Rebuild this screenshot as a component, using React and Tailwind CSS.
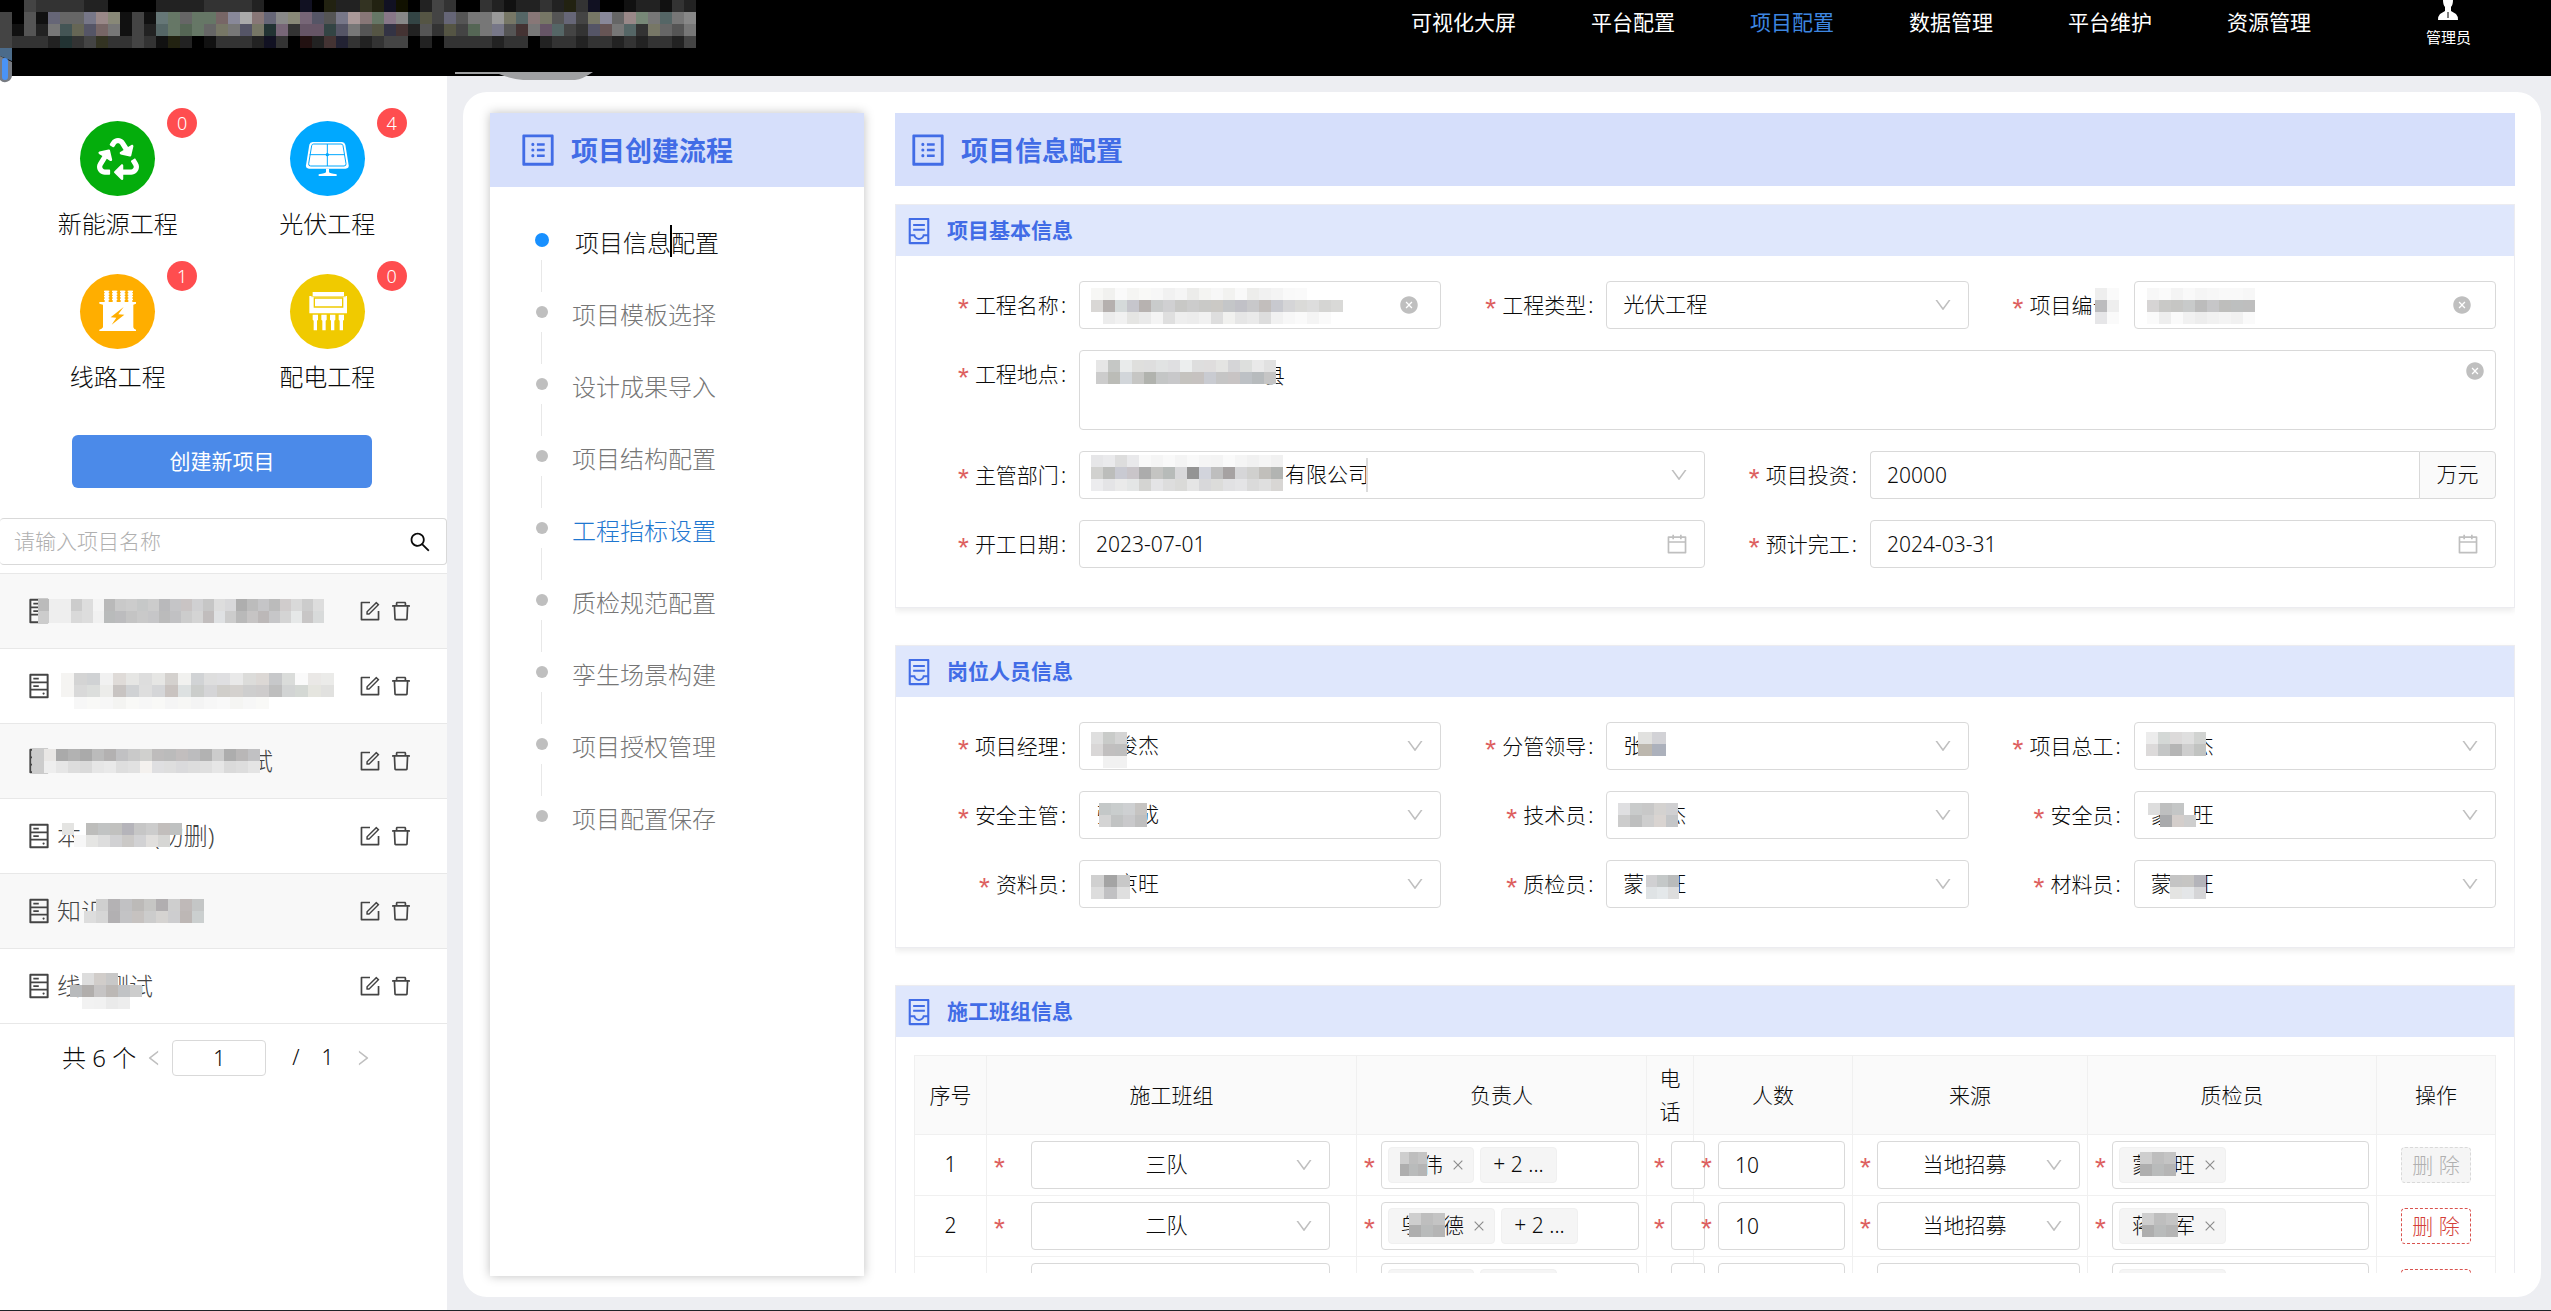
import { useState } from "react";
import {
  AiFillCloseCircle,
  AiOutlineCalendar,
  AiOutlineClose,
  AiOutlineContainer,
  AiOutlineDelete,
  AiOutlineDown,
  AiOutlineForm,
  AiOutlineHdd,
  AiOutlineLeft,
  AiOutlineProfile,
  AiOutlineRight,
  AiOutlineSearch,
} from "react-icons/ai";
import { FaRecycle } from "react-icons/fa";

const NAV = ["可视化大屏", "平台配置", "项目配置", "数据管理", "平台维护", "资源管理"];

const STEPS = [
  "项目信息配置",
  "项目模板选择",
  "设计成果导入",
  "项目结构配置",
  "工程指标设置",
  "质检规范配置",
  "孪生场景构建",
  "项目授权管理",
  "项目配置保存",
];

// Cada fila del mosaico es una lista de celdas; "-" queda transparente
const MASKS = {
  brand: [
    "- - 444 333 333 333 333 222 222 - - - - 222 222 222 222 333 333 333 333 222 - - - 112 - 221 222 222 332 221 112 110 - 222 444 333 - - 333 222 111 222 222 333 222 221 333 112 - - 111 222 222 111 333 222",
    "444 000 555 111 667 666 666 778 988 887 111 444 111 677 676 666 676 676 766 889 aaa 877 667 888 887 767 556 555 778 a99 877 676 878 888 344 554 444 667 555 777 777 999 776 566 877 776 555 667 444 776 889 666 988 787 777 566 777 888",
    "444 111 555 222 777 455 665 556 766 777 111 444 222 566 676 565 676 666 776 777 556 776 233 767 333 656 656 344 556 777 555 554 334 433 222 555 333 554 444 565 777 778 555 433 777 656 566 444 333 556 655 777 566 333 776 666 555 777",
    "444 333 333 333 222 233 333 444 332 333 333 444 333 111 221 222 - 111 333 333 333 222 112 333 - 211 222 433 223 333 222 333 444 444 - 222 - 333 333 333 333 222 333 333 - 222 333 333 222 333 333 222 333 222 333 333 222 444",
  ],
  project1: [
    "bbb eee eee ccc ddd f4f4f4 b9b9b9 c9c9c9 ccc c6c8c8 ccc b9b9bb c5c5c7 c9c4c4 d0d0d2 c6c6c6 ddd d8d8da aeaeae bcbcbc c5c5c7 bbb d0cccc d9d9d9 ccc ddd",
    "ccc eee eee d9d9d9 ddd f1f1f1 b9bbbb bcbcbe c4c4c4 c9c9c9 c6c6c8 bbb c1c1c3 ccc d4d4d4 c1bdbd dfe1e3 ccc b9b9b9 c6c4c4 bcb8b8 c6c6c8 d4d4d4 e6e8e8 c8c6c6 d8dada",
  ],
  project2: [
    "- f5f4f2 d4d4d4 d0d2d4 f1f1f1 dfdbd8 e6e6e4 ddd e6e6e4 d4d1ce f1f1ef d1d3d5 dedede dfdfe1 e9e9e9 dcdcda dcd8d5 c7c8ca dadcda fafafa eae8e6 ebebe9",
    "- f5f4f2 d9d9d9 dcdedc ececea c8c4c2 d0d2d4 dedede d5d6d8 c9c3c0 dde1e1 cbcdcb d5d5d7 d0ceca d4d1ce cecece cecccc bebebe d2d4d4 d4d8d4 e5e5df e1e1df",
    "- - f7f7f7 f9f9f7 f7f7f7 f4f4f2 f9f9f7 f7f7f7 f9f9f7 f5f5f5 f7f7f5 f4f4f4 f7f7f7 f9f9f9 f5f5f3 f7f7f7 f9f9f7",
  ],
  project3: [
    "ccc e9e7e5 aaa b2b2b2 aaa bbb b3b1b1 c1c1c3 c9c9c9 d0d0ce bebcbc bbb c2bebe bcbcbe b2b2b2 ccc adadad b9b7b7 c1c1c3",
    "ccc eee e6e6e6 ddd dadada e6e6e6 e9e9e9 dedede e1e1e1 f4f1ee dfdfe1 dedede dadadc ddd dfdfdf e6e6e6 dadada ddd e4e4e4",
  ],
  project4: [
    "e4e4e2 - bdbdbb c1c3c3 c1c1bf b5b4ba c6c6c6 ccc c2bebc bfc1c1",
    "- f7f7f7 e5e5e3 ddd d1d1d3 cbc9c7 d2d2d4 e1dfdd d6d6d4 -",
  ],
  project5: [
    "- cfcfcf b4b2b4 c1c1c3 bcbab8 c6c6c4 b1aeb0 cecece bfb9b8 c4c6c6",
    "ddd d6d6d6 b2b0b2 c3c3c5 c6c2c0 ccc d5d3d1 cdcdcf bdb7b5 cbcfcf",
  ],
  project6: [
    "- ddd d1cdca c8c8c8 - -",
    "b8babc b1aeac c6c4c4 bcb8b5 c1c3c5 ccc",
    "- f2f2f2 f1f1f1 eaeaea ededed -",
  ],
  name: [
    "f7f7f5 f1f1ef fafafa f5f5f3 f9f9f7 f7f7f7 f1f1f1 f5f5f5 ececea f4f4f2 f7f7f7 f2f2f0 f9f9f9 ededeb f1f1f1 f4f4f4 f9f9f9 fafafa",
    "d9d7d5 b5b0ae d5dada c6c6cc b7b2b0 c9cbcb d0d0d2 c8c8c6 ccc c9c9c7 cbc9c5 c4c6c8 c1c1c7 c8c8ca c2bebc c8c9cf d5d5d7 dadad8 ddd d5d5d3 d9d9d7",
    "- ececec f1f1f1 e5e5e3 eaeaea f4f4f4 dfdfdf eee ececec f1f1f1 dedede f1f1ef e6e6e6 eaeaea ddd f1f1f1 f7f7f7 fafafa f4f4f4 fafafa",
  ],
  code: [
    "f7f7f7 fafafa f4f4f4 f9f9f9 f5f5f5 f7f7f7 f9f9f9 f9f9f9 f7f7f7",
    "d6d4d4 c9c9c7 c6c6c4 c8caca bcbcbc c6c6c8 bebebc bdbfbf bebebe",
    "fafafa eee fafafa f1f1f1 ededed f1f1f1 f4f4f4 f1f1f1 fafafa",
  ],
  codeLabel: ["eee fafafa fff", "bcbcbe eee fff", "e6e6e8 fafafa fff"],
  place: [
    "e6e6e6 c5c7c5 e9ebeb dfdfdd dedede e1e3e3 dfdfe1 eceeee dedede dfdddd e4e4e2 d5d5d7 dddfdd e9e9e9 e1e1e1",
    "ccc bbbcb7 d2d6da c6c6c4 b1b3ae c4c6c6 c8c8ca c5c3bf c6c2c0 c9cbd1 c5c5c5 c8c4c4 bdc1c5 b7bbbd c5c5c5",
  ],
  dept: [
    "e6e6e8 eaeaec ddd e9e9eb f9f9f9 f5f5f5 f9f9f9 f4f4f4 f9f9f9 f5f5f5 f4f4f4 fafafa f5f5f5 f1f1f1 f5f5f5 f1f1f1",
    "d1d1cf bcbdbb c9cad2 c9c5c9 acacac c4c4c2 b7bbb9 d8d8da 949494 d2d4dc bebebe a6a2a2 d6d6d8 d0d0ce c1bfbb b2b4b2",
    "ececee e4e4e6 eaeaea e4e6e6 d4d4d2 e4e4e6 ddd dadad8 e5e5e5 d8d8da dcdcda e1e1e3 e4e4e6 dadada dfdfdf d8d6d4",
  ],
  nameA: ["dfdfdf c9cbc9 d4d4d4 -", "d9d7d7 c1bfbf bfbfbf -", "- f1f1f1 f1f1f1 -"],
  nameB: ["c4c8c8 c9cdcd ced0d2 c6c4c2", "d4d4d4 c1c3c3 c9c9cb bfbfbf"],
  nameC: ["d0d0d0 a4a4a4 c8c8c8", "ddd c1c1c3 dfdfdf"],
  nameD: ["e1e1df d2d2d6", "bcb7ae acb1bc"],
  nameE: ["dfdfe1 c9cbcb c8c8c8 d4d2d0 d0d0d2", "ccc bebfbf cecece d9d4d1 c4c6c8"],
  nameF: ["d0d0d2 c4c8c8 b9bbbb", "dfe3e5 e4e8ea ddd"],
  nameG: ["ececec d4d8d6 dcdada dfdfdf d1d3d1", "dcdada c4c6c6 b5b5b5 cecece c1c3c1"],
  nameH: ["ddd bebfbf c4c6c6 -", "- a9aaac d4cecb cecece"],
  nameI: ["- c4c4c4 c6c5c3 b4b4ba", "- e4e4e2 e4e6e8 d5d5d7"],
  tag: ["cecece bebebe c4c4c4", "aeaeae b9bbbb b5b5b5"],
};

function Mask({ of, cell = 12, className }) {
  const rows = MASKS[of].map((row) => row.split(" "));
  const width = Math.max(...rows.map((row) => row.length)) * cell;
  return (
    <svg
      aria-hidden="true"
      width={width}
      height={rows.length * 12}
      shapeRendering="crispEdges"
      className={`pointer-events-none absolute ${className}`}
    >
      {rows.map((row, y) =>
        row.map((c, x) =>
          c === "-" ? null : (
            <rect key={`${x}-${y}`} x={x * cell} y={y * 12} width={cell} height="12" fill={`#${c}`} />
          )
        )
      )}
    </svg>
  );
}

function SolarIcon() {
  return (
    <svg viewBox="0 0 225 225" className="size-full" fill="#fff">
      <path d="M68 63h88q8 0 10 8l10 62q1 10-9 10H57q-10 0-9-10l10-62q2-8 10-8z" />
      <path
        d="M71 69h82q5 0 6 5l9 54q1 7-6 7H62q-7 0-6-7l9-54q1-5 6-5zM112 69v66M59 101h106"
        fill="none"
        stroke="#00a8ff"
        strokeWidth="3"
      />
      <circle cx="112" cy="101" r="5" fill="#00a8ff" />
      <path d="M108 143h9v10q1 4 23 7v5H86v-5q21-3 22-7z" />
    </svg>
  );
}

function LineIcon() {
  return (
    <svg viewBox="0 0 225 225" className="size-full" fill="#fff">
      {[72, 96, 120, 143].map((x) => (
        <g key={x}>
          <path d={`M${x + 2} 50h12v34h-12z`} />
          <path
            d={`M${x} 52h16M${x} 60h16M${x} 68h16M${x} 76h16`}
            stroke="#fff"
            strokeWidth="4"
          />
        </g>
      ))}
      <path d="M58 84h110v5l-8 3v68q1 5 8 7v4H58v-4q8-2 11-7V92l-11-3z" />
      <path d="M131 99 92 130l17 1-14 21 38-30-18-1z" fill="#ffae00" />
    </svg>
  );
}

function PowerIcon() {
  return (
    <svg viewBox="0 0 225 225" className="size-full" fill="#fff">
      <path d="M68 54h94v12h9v52H58V66h10z" />
      <path d="M73 72h85v27H73z" fill="none" stroke="#f0ca00" strokeWidth="4" />
      <path d="M64 68h103" stroke="#f0ca00" strokeWidth="2" />
      {[68, 94, 120, 146].map((x) => (
        <path key={x} d={`M${x} 122h16v15l-3 3v29h-10v-29l-3-3z`} />
      ))}
    </svg>
  );
}

const KINDS = [
  { name: "新能源工程", count: 0, color: "bg-[#04ad0c]", icon: <FaRecycle className="size-[42px] text-white" /> },
  { name: "光伏工程", count: 4, color: "bg-[#00a8ff]", icon: <SolarIcon /> },
  { name: "线路工程", count: 1, color: "bg-[#ffae00]", icon: <LineIcon /> },
  { name: "配电工程", count: 0, color: "bg-[#f0ca00]", icon: <PowerIcon /> },
];

const PROJECTS = [
  { id: 1, name: "", mask: <Mask of="project1" cell={11} className="left-[38px] top-[25px]" /> },
  { id: 2, name: "", mask: <Mask of="project2" cell={13} className="left-12 top-6" /> },
  { id: 3, name: "　　　　　　　　试", mask: <Mask of="project3" className="left-8 top-[25px]" /> },
  { id: 4, name: "本　　　(勿删)", mask: <Mask of="project4" className="left-[62px] top-6" /> },
  { id: 5, name: "知识", mask: <Mask of="project5" className="left-[84px] top-[25px]" /> },
  { id: 6, name: "线路测试", mask: <Mask of="project6" className="left-[70px] top-6" /> },
];

function Header() {
  return (
    <header className="relative flex h-[76px] shrink-0 items-start justify-end bg-black pr-20 font-normal text-white">
      <Mask of="brand" className="left-0 top-0" />
      <svg aria-hidden="true" width="12" height="36" className="absolute left-0 top-12">
        <path d="M0 0h12v13L0 8z" fill="#4b6b8a" />
        <path d="M0 8l12 6v13a7 7 0 0 1-12 5z" fill="#777b82" />
        <rect x="2" y="10" width="6" height="22" rx="3" fill="#4a93f5" />
      </svg>
      <svg aria-hidden="true" width="138" height="12" className="absolute left-[455px] top-[72px]">
        <path d="M0 0h138q-10 7-18 8H68q-12-1-24-6L0 2z" fill="#9fa0a2" />
      </svg>
      <nav className="mr-[115px] flex gap-[75px] pt-2">
        {NAV.map((item) => (
          <a
            key={item}
            href="#"
            className={`text-[21px] leading-7 ${item === "项目配置" ? "text-[#3d86e0]" : ""}`}
          >
            {item}
          </a>
        ))}
      </nav>
      <a href="#" className="flex flex-col items-center text-[15px] leading-[22px]">
        <svg width="22" height="26" viewBox="0 0 22 26" fill="#fff" aria-hidden="true">
          <path d="M6 0h10q0 5-2 7v4l5 3q2 2 2 6H1q0-4 2-6l5-3V7Q6 5 6 0z" />
          <path d="M11 12v6" stroke="#000" strokeWidth="1" />
        </svg>
        管理员
      </a>
    </header>
  );
}

function Sidebar() {
  const [query, setQuery] = useState("");
  return (
    <aside className="flex w-[447px] shrink-0 flex-col bg-white">
      <div className="grid grid-cols-2 pl-[13px] pr-[15px] pt-[45px]">
        {KINDS.map((k) => (
          <div key={k.name} className="flex h-[153px] flex-col items-center">
            <div className="relative">
              <div className={`flex size-[75px] items-center justify-center overflow-hidden rounded-full ${k.color}`}>
                {k.icon}
              </div>
              <span className="absolute -right-[42px] -top-[13px] flex size-[30px] items-center justify-center rounded-full bg-[#ff4d4f] text-lg text-white">
                {k.count}
              </span>
            </div>
            <span className="mt-3 text-2xl leading-8">{k.name}</span>
          </div>
        ))}
      </div>
      <button
        type="button"
        className="ml-[72px] mt-2 h-[53px] w-[300px] shrink-0 rounded-md bg-[#4b8ae9] text-[21px] font-normal text-white"
      >
        创建新项目
      </button>
      <div className="mt-[30px] flex h-[47px] shrink-0 items-center rounded-sm border border-l-0 border-[#d9d9d9] pl-[14px] pr-[14px]">
        <input
          aria-label="项目名称"
          placeholder="请输入项目名称"
          value={query}
          onChange={(e) => setQuery(e.target.value)}
          className="min-w-0 flex-1 text-[21px] outline-none placeholder:text-[#b0b0b0]"
        />
        <button type="button" aria-label="搜索">
          <AiOutlineSearch className="size-6" />
        </button>
      </div>
      <ul className="mt-2 border-t border-[#e8e8e8] text-[#444]">
        {PROJECTS.map((p) => (
          <li
            key={p.id}
            className="relative flex h-[75px] items-center border-b border-[#e8e8e8] pl-[25px] pr-[34px] odd:bg-[#f8f8f8]"
          >
            <AiOutlineHdd className="size-7 shrink-0" />
            <span className="ml-1 flex-1 whitespace-nowrap text-2xl">{p.name}</span>
            <div className="pointer-events-none absolute left-0 top-0 h-full">{p.mask}</div>
            <button type="button" aria-label="编辑">
              <AiOutlineForm className="size-6" />
            </button>
            <button type="button" aria-label="删除" className="ml-[7px]">
              <AiOutlineDelete className="size-6" />
            </button>
          </li>
        ))}
      </ul>
      <div className="mt-4 flex h-9 items-center pl-[62px] text-[21px]">
        <span className="text-2xl">共 6 个</span>
        <button type="button" aria-label="上一页" className="ml-2 text-[#bfbfbf]">
          <AiOutlineLeft className="size-5" />
        </button>
        <input
          aria-label="页码"
          defaultValue="1"
          className="ml-2 h-9 w-[94px] rounded-sm border border-[#d9d9d9] text-center"
        />
        <span className="ml-[26px]">/</span>
        <span className="ml-[22px]">1</span>
        <button type="button" aria-label="下一页" className="ml-5 text-[#bfbfbf]">
          <AiOutlineRight className="size-5" />
        </button>
      </div>
    </aside>
  );
}

function StepPanel() {
  return (
    <section className="flex w-[374px] shrink-0 flex-col bg-white shadow-[0_0_10px_rgba(0,0,0,0.25)]">
      <h2 className="flex h-[74px] shrink-0 items-center gap-[13px] bg-[#d6dffb] pl-7 text-[27px] font-bold text-[#416ce6]">
        <AiOutlineProfile className="size-10" />
        <span className="pt-[3px]">项目创建流程</span>
      </h2>
      <ol className="pt-5">
        {STEPS.map((step, i) => (
          <li key={step} className="relative flex h-[72px] items-center pl-[45px] text-2xl">
            <span className="mb-[6px] flex w-[14px] justify-center">
              <span className={`rounded-full ${i === 0 ? "size-[14px] bg-[#1890ff]" : "size-3 bg-[#bfbfbf]"}`} />
            </span>
            {i < STEPS.length - 1 && (
              <span className="absolute left-[51px] top-[53px] h-8 w-px bg-[#e8e8e8]" />
            )}
            <a
              href="#"
              className={
                i === 0
                  ? "ml-[26px] text-[#111]"
                  : i === 4
                    ? "ml-[23px] text-[#1f77d0]"
                    : "ml-[23px] text-[#767676]"
              }
            >
              {step}
            </a>
            {i === 0 && <span className="absolute left-[180px] top-[18px] h-8 w-[2px] bg-black" />}
          </li>
        ))}
      </ol>
    </section>
  );
}

function Card({ title, children }) {
  return (
    <section className="border border-[#ececf0] bg-white shadow-[0_3px_6px_rgba(0,0,0,0.08)]">
      <h3 className="flex h-[51px] items-center gap-[13px] bg-[#dfe7fc] pl-2 text-[21px] font-bold text-[#416ce6]">
        <AiOutlineContainer className="size-[30px]" />
        {title}
      </h3>
      {children}
    </section>
  );
}

function Star() {
  return (
    <span aria-hidden="true" className="w-5 shrink-0 pt-3 font-['Liberation_Mono'] text-[28px] leading-6 text-[#dd5f5f]">
      *
    </span>
  );
}

const BOX = "h-12 w-full rounded border border-[#d9d9d9] bg-white text-[21px] outline-none";

function Field({ id, label, wide, children, labelMask }) {
  return (
    <div className={`flex ${wide}`}>
      <label htmlFor={id} className="relative flex h-12 w-[165px] shrink-0 items-center justify-end pr-[13px] pt-px text-[21px]">
        <Star />
        {label}
        <span className="pl-[2px]">:</span>
        {labelMask}
      </label>
      <div className="relative min-w-0 flex-1">{children}</div>
    </div>
  );
}

function Select({ id, value, className = "px-4", ...rest }) {
  return (
    <>
      <select id={id} className={`appearance-none ${BOX} ${className}`} {...rest}>
        <option>{value}</option>
      </select>
      <AiOutlineDown className="pointer-events-none absolute right-4 top-[14px] size-5 text-[#bfbfbf]" />
    </>
  );
}

function Clear({ className }) {
  return (
    <button type="button" aria-label="清空" className={`absolute text-[#bfbfbf] ${className}`}>
      <AiFillCloseCircle className="size-5" />
    </button>
  );
}

function DateInput({ id, value }) {
  return (
    <>
      <input id={id} defaultValue={value} className={`${BOX} px-4`} />
      <AiOutlineCalendar className="pointer-events-none absolute right-4 top-3 size-6 text-[#bfbfbf]" />
    </>
  );
}

function BasicInfo() {
  return (
    <Card title="项目基本信息">
      <div className="grid grid-cols-6 gap-y-[21px] px-[18px] pb-[39px] pt-[25px]">
        <Field id="name" label="工程名称" wide="col-span-2">
          <input id="name" className={`${BOX} pl-4 pr-12`} />
          <Mask of="name" className="left-3 top-[7px]" />
          <Clear className="right-[22px] top-[14px]" />
        </Field>
        <Field id="type" label="工程类型" wide="col-span-2">
          <Select id="type" value="光伏工程" />
        </Field>
        <Field
          id="code"
          label="项目编号"
          wide="col-span-2"
          labelMask={<Mask of="codeLabel" className="left-[126px] top-[7px]" />}
        >
          <input id="code" className={`${BOX} pl-4 pr-12`} />
          <Mask of="code" className="left-[13px] top-[7px]" />
          <Clear className="right-6 top-[14px]" />
        </Field>
        <Field id="place" label="工程地点" wide="col-span-6">
          <textarea
            id="place"
            defaultValue="　　　　　　　　县"
            className="block h-20 w-full resize-none rounded border border-[#d9d9d9] bg-white px-4 py-2 text-[21px] leading-8 outline-none"
          />
          <Mask of="place" className="left-[17px] top-[10px]" />
          <Clear className="right-[11px] top-[11px]" />
        </Field>
        <Field id="dept" label="主管部门" wide="col-span-3">
          <Select id="dept" value="有限公司" className="pl-[205px] pr-10" />
          <Mask of="dept" className="left-3 top-1" />
          <span className="absolute left-[287px] top-[7px] h-[34px] w-[2px] bg-[#dcdcdc]" />
        </Field>
        <Field id="invest" label="项目投资" wide="col-span-3">
          <div className="flex">
            <input id="invest" defaultValue="20000" className={`${BOX} rounded-r-none border-r-0 px-4`} />
            <span className="flex h-12 w-[77px] shrink-0 items-center justify-center rounded-r border border-[#d9d9d9] bg-[#fafafa] text-[21px]">
              万元
            </span>
          </div>
        </Field>
        <Field id="start" label="开工日期" wide="col-span-3">
          <DateInput id="start" value="2023-07-01" />
        </Field>
        <Field id="end" label="预计完工" wide="col-span-3">
          <DateInput id="end" value="2024-03-31" />
        </Field>
      </div>
    </Card>
  );
}

const STAFF = [
  { id: "manager", label: "项目经理", value: "俊杰", pad: "pl-[37px]", mask: <Mask of="nameA" className="left-3 top-[10px]" /> },
  { id: "leader", label: "分管领导", value: "张", mask: <Mask of="nameD" cell={14} className="left-8 top-[10px]" /> },
  { id: "chief", label: "项目总工", value: "杰", pad: "pl-[58px]", mask: <Mask of="nameG" className="left-3 top-[10px]" /> },
  { id: "safety", label: "安全主管", value: "张　成", mask: <Mask of="nameB" className="left-5 top-3" /> },
  { id: "tech", label: "技术员", value: "杰", pad: "pl-[58px]", mask: <Mask of="nameE" className="left-3 top-3" /> },
  { id: "guard", label: "安全员", value: "蒙　旺", mask: <Mask of="nameH" className="left-[14px] top-3" /> },
  { id: "docs", label: "资料员", value: "京旺", pad: "pl-[37px]", mask: <Mask of="nameC" cell={13} className="left-3 top-[15px]" /> },
  { id: "quality", label: "质检员", value: "蒙　旺", mask: <Mask of="nameF" cell={11} className="left-10 top-[15px]" /> },
  { id: "material", label: "材料员", value: "蒙　旺", mask: <Mask of="nameI" className="left-6 top-[15px]" /> },
];

function StaffInfo() {
  return (
    <Card title="岗位人员信息">
      <div className="grid grid-cols-3 gap-y-[21px] px-[18px] pb-[39px] pt-[25px]">
        {STAFF.map((s) => (
          <Field key={s.id} id={s.id} label={s.label}>
            <Select id={s.id} value={s.value} className={s.pad ?? "pl-4"} />
            {s.mask}
          </Field>
        ))}
      </div>
    </Card>
  );
}

const TEAMS = [
  {
    no: "1",
    team: "三队",
    lead: "　伟",
    leadMask: <Mask of="tag" cell={9} className="left-[11px] top-1" />,
    more: "+ 2 ...",
    count: "10",
    source: "当地招募",
    checker: "蒙　旺",
    checkerMask: <Mask of="tag" className="left-5 top-1" />,
  },
  {
    no: "2",
    team: "二队",
    lead: "邬　德",
    leadMask: <Mask of="tag" className="left-5 top-1" />,
    more: "+ 2 ...",
    count: "10",
    source: "当地招募",
    checker: "蒋　军",
    checkerMask: <Mask of="tag" className="left-[22px] top-1" />,
  },
  { no: "", team: "", lead: "　　", more: "", count: "", source: "", checker: "　　　" },
];

function Tag({ children, mask }) {
  return (
    <span className="relative flex h-9 shrink-0 items-center gap-2 whitespace-nowrap rounded-sm border border-[#f0f0f0] bg-[#f5f5f5] pl-3 pr-2 text-[21px]">
      {children}
      {mask}
      <button type="button" aria-label="移除">
        <AiOutlineClose className="size-[14px] text-[#8c8c8c]" />
      </button>
    </span>
  );
}

function Cell({ children, className = "pr-[7px]" }) {
  return (
    <td className="border border-[#f0f0f0] p-0">
      <div className={`flex h-[60px] items-center pl-1 ${className}`}>
        <Star />
        {children}
      </div>
    </td>
  );
}

function TeamInfo() {
  return (
    <Card title="施工班组信息">
      <div className="px-[18px] pb-10 pt-[18px]">
        <table className="w-full table-fixed border-collapse text-[21px]">
          <colgroup>
            <col className="w-[72px]" />
            <col />
            <col className="w-[290px]" />
            <col className="w-[47px]" />
            <col className="w-[159px]" />
            <col className="w-[235px]" />
            <col className="w-[289px]" />
            <col className="w-[119px]" />
          </colgroup>
          <thead>
            <tr className="h-[79px] bg-[#fafafa]">
              {["序号", "施工班组", "负责人", "电话", "人数", "来源", "质检员", "操作"].map((h) => (
                <th key={h} className="border border-[#f0f0f0] px-3 font-light leading-[33px]">
                  {h}
                </th>
              ))}
            </tr>
          </thead>
          <tbody>
            {TEAMS.map((t, i) => (
              <tr key={i} className="h-[61px]">
                <td className="border border-[#f0f0f0] text-center">{t.no}</td>
                <Cell className="pr-[26px]">
                  <div className="relative ml-5 flex-1">
                    <Select
                      aria-label="施工班组"
                      value={t.team}
                      className="pl-2 pr-9 text-center [text-align-last:center]"
                    />
                  </div>
                </Cell>
                <Cell>
                  <div className={`${BOX} flex items-center gap-[6px] px-[6px]`}>
                    <Tag mask={t.leadMask}>{t.lead}</Tag>
                    <span className="flex h-9 w-[77px] items-center justify-center rounded-sm border border-[#f0f0f0] bg-[#f5f5f5]">
                      {t.more}
                    </span>
                  </div>
                </Cell>
                <Cell>
                  <div className="w-[34px] shrink-0">
                    <input aria-label="电话" className={BOX} />
                  </div>
                </Cell>
                <Cell>
                  <input aria-label="人数" defaultValue={t.count} className={`${BOX} px-4`} />
                </Cell>
                <Cell>
                  <div className="relative flex-1">
                    <Select
                      aria-label="来源"
                      value={t.source}
                      className="pl-2 pr-9 text-center [text-align-last:center]"
                    />
                  </div>
                </Cell>
                <Cell>
                  <div className={`${BOX} flex items-center px-[6px]`}>
                    <Tag mask={t.checkerMask}>{t.checker}</Tag>
                  </div>
                </Cell>
                <td className="border border-[#f0f0f0] p-0 text-center">
                  <button
                    type="button"
                    disabled={i === 0}
                    className="h-9 w-[70px] rounded-sm border border-dashed border-[#d9534f] align-middle text-[21px] leading-8 text-[#d43f3a] disabled:border-[#d9d9d9] disabled:bg-[#f5f5f5] disabled:text-[#b0b0b0]"
                  >
                    删 除
                  </button>
                </td>
              </tr>
            ))}
          </tbody>
        </table>
      </div>
    </Card>
  );
}

export default function App() {
  return (
    <div className="flex h-screen flex-col overflow-hidden border-b border-[#1f2328] bg-[#edeef2] font-['Noto_Sans','Noto_Sans_CJK_SC',sans-serif] font-light text-[#0a0a0a]">
      <Header />
      <div className="flex min-h-0 flex-1">
        <Sidebar />
        <main className="mb-[13px] ml-4 mr-[10px] mt-4 flex min-w-0 flex-1 gap-[31px] rounded-3xl bg-white py-[21px] pl-[27px] pr-[26px]">
          <StepPanel />
          <div className="flex min-w-0 flex-1 flex-col">
            <h2 className="flex h-[73px] shrink-0 items-center gap-[13px] bg-[#d6dffb] pl-[13px] text-[27px] font-bold text-[#416ce6]">
              <AiOutlineProfile className="size-10" />
              <span className="pt-[3px]">项目信息配置</span>
            </h2>
            <div className="mb-[3px] mt-[18px] flex min-h-0 flex-1 flex-col gap-[37px] overflow-hidden [&>*]:shrink-0">
              <BasicInfo />
              <StaffInfo />
              <TeamInfo />
            </div>
          </div>
        </main>
      </div>
    </div>
  );
}
